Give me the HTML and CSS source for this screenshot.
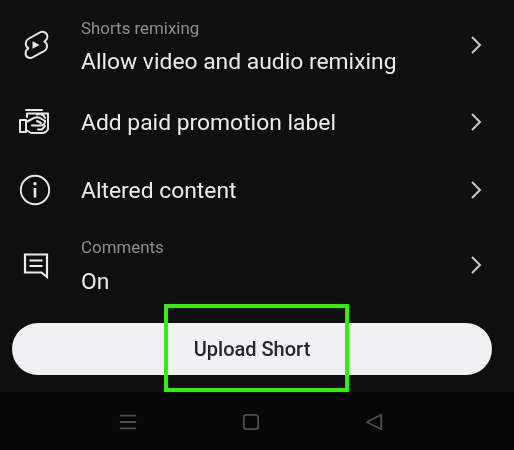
FILE: index.html
```html
<!DOCTYPE html>
<html lang="en">
<head>
<meta charset="utf-8">
<title>Upload Short</title>
<link rel="stylesheet" href="styles.css">
</head>
<body>
<main class="screen">
  <div class="list">
    <div class="row row-tall-first">
      <svg class="icon" viewBox="0 0 34 34" fill="none" stroke="#e8e8e8" stroke-width="1.9" stroke-linejoin="round" stroke-linecap="round">
        <path d="M22.5 4.2 L11 10.5 C6.5 13 7 18.5 10.5 20.2 C6.8 22.4 6.6 27.6 9.8 29.4 C11.6 30.4 13.4 30 15 29.2 L26 23.2 C30 20.8 30 15.5 26.3 13.6 C30 11.6 30.5 6.6 27.2 4.6 C25.7 3.7 24 3.5 22.5 4.2 Z"/>
        <path d="M14.5 13.2 L21.5 17 L14.5 20.8 Z" fill="#e8e8e8" stroke="none"/>
      </svg>
      <div class="text">
        <span class="label">Shorts remixing</span>
        <span class="value">Allow video and audio remixing</span>
      </div>
      <svg class="chevron" viewBox="0 0 12 20" fill="none" stroke="#c9c9c9" stroke-width="2"><path d="M2 2 L10 10 L2 18"/></svg>
    </div>
    <div class="row">
      <svg class="icon" viewBox="0 0 34 34" fill="none" stroke="#e8e8e8" stroke-width="2" stroke-linejoin="round" stroke-linecap="round">
        <path d="M8 5 H24"/>
        <path d="M9 12 V8.5 H30 V24"/>
        <path d="M2 15 H8 V27 H2 Z"/>
        <path d="M8 17 L14 14 C17 12 20 12 22 13 L27 16"/>
        <path d="M14 20.5 H22 C25 20.5 27 19 27 16"/>
        <path d="M8 25 L13 28 H24 C27 28 30 26 30 23"/>
        <path d="M19 9.5 A6 6 0 0 1 27 13"/>
        <path d="M19 16 L23 18"/>
        <path d="M27 21 L24 24.5 H20"/>
      </svg>
      <div class="text"><span class="value">Add paid promotion label</span></div>
      <svg class="chevron" viewBox="0 0 12 20" fill="none" stroke="#c9c9c9" stroke-width="2"><path d="M2 2 L10 10 L2 18"/></svg>
    </div>
    <div class="row">
      <svg class="icon" viewBox="0 0 34 34" fill="none" stroke="#e8e8e8" stroke-width="1.9">
        <circle cx="17" cy="17" r="14.2"/>
        <path d="M17 15 V24.5" stroke-width="2.6"/>
        <circle cx="17" cy="10.8" r="1.7" fill="#e8e8e8" stroke="none"/>
      </svg>
      <div class="text"><span class="value">Altered content</span></div>
      <svg class="chevron" viewBox="0 0 12 20" fill="none" stroke="#c9c9c9" stroke-width="2"><path d="M2 2 L10 10 L2 18"/></svg>
    </div>
    <div class="row row-tall-last">
      <svg class="icon" viewBox="0 0 34 34" fill="none" stroke="#ececec" stroke-width="2.2">
        <path d="M7 6.5 H29 V29 L23.5 24.5 H7 Z"/>
        <path d="M11.5 12.5 H24.5 M11.5 18 H24.5" stroke-width="2"/>
      </svg>
      <div class="text">
        <span class="label">Comments</span>
        <span class="value">On</span>
      </div>
      <svg class="chevron" viewBox="0 0 12 20" fill="none" stroke="#c9c9c9" stroke-width="2"><path d="M2 2 L10 10 L2 18"/></svg>
    </div>
  </div>
  <div class="action">
    <button class="upload" type="button">Upload Short</button>
    <div class="highlight"></div>
  </div>
  <nav class="navbar">
    <svg class="nav-icon" viewBox="0 0 20 20" fill="none" stroke="#4e4e4e" stroke-width="2"><path d="M1 3 H19 M1 10 H19 M1 17 H19"/></svg>
    <svg class="nav-icon" viewBox="0 0 20 20" fill="none" stroke="#4e4e4e" stroke-width="2"><rect x="2" y="2" width="16" height="16" rx="3"/></svg>
    <svg class="nav-icon" viewBox="0 0 20 20" fill="none" stroke="#4e4e4e" stroke-width="2" stroke-linejoin="round"><path d="M18 2 V18 L2 10 Z"/></svg>
  </nav>
</main>
</body>
</html>
```
FILE: styles.css
```css
* { box-sizing: border-box; }
html, body { margin: 0; padding: 0; background: #0f0f0f; }
.screen {
  width: 514px;
  height: 450px;
  overflow: hidden;
  display: flex;
  flex-direction: column;
  background: #0f0f0f;
  font-family: Roboto, "Liberation Sans", sans-serif;
  filter: blur(0.35px);
}
.list {
  display: flex;
  flex-direction: column;
  gap: 12px;
  padding-top: 8px;
  height: 304px;
}
.row {
  display: flex;
  align-items: center;
  height: 56px;
  padding: 0 32px 0 18px;
}
.row-tall-first { height: 74px; }
.row-tall-last { height: 70px; }
.row-tall-first .text { padding-top: 4px; }
.row-tall-last .text { padding-top: 3px; }
.icon { width: 34px; height: 34px; flex: none; }
.text {
  flex: 1;
  margin-left: 29px;
  display: flex;
  flex-direction: column;
}
.label { font-size: 16.9px; line-height: 22px; color: #8f8f8f; }
.value { font-size: 22.85px; line-height: 30px; color: #ececec; margin-top: 2px; }
.label + .value { margin-top: 8px; }
.row-tall-last .label + .value { margin-top: 9px; }
.chevron { width: 12px; height: 20px; flex: none; }
.action {
  position: relative;
  height: 88px;
  padding: 19px 22px 0 12px;
}
.upload {
  display: block;
  width: 100%;
  height: 52px;
  border: 0;
  border-radius: 26px;
  background: #f1f1f3;
  color: #26262a;
  font-family: inherit;
  font-size: 20px;
  font-weight: 500;
  padding: 0;
}
.highlight {
  position: absolute;
  left: 164px;
  top: 0;
  width: 185px;
  height: 88px;
  border: 4px solid #2ef20a;
}
.navbar {
  flex: 1;
  background: #070707;
  display: flex;
  align-items: center;
  padding: 2px 0 0 119px;
  gap: 105px;
}
.nav-icon { width: 18px; height: 18px; flex: none; }
```
